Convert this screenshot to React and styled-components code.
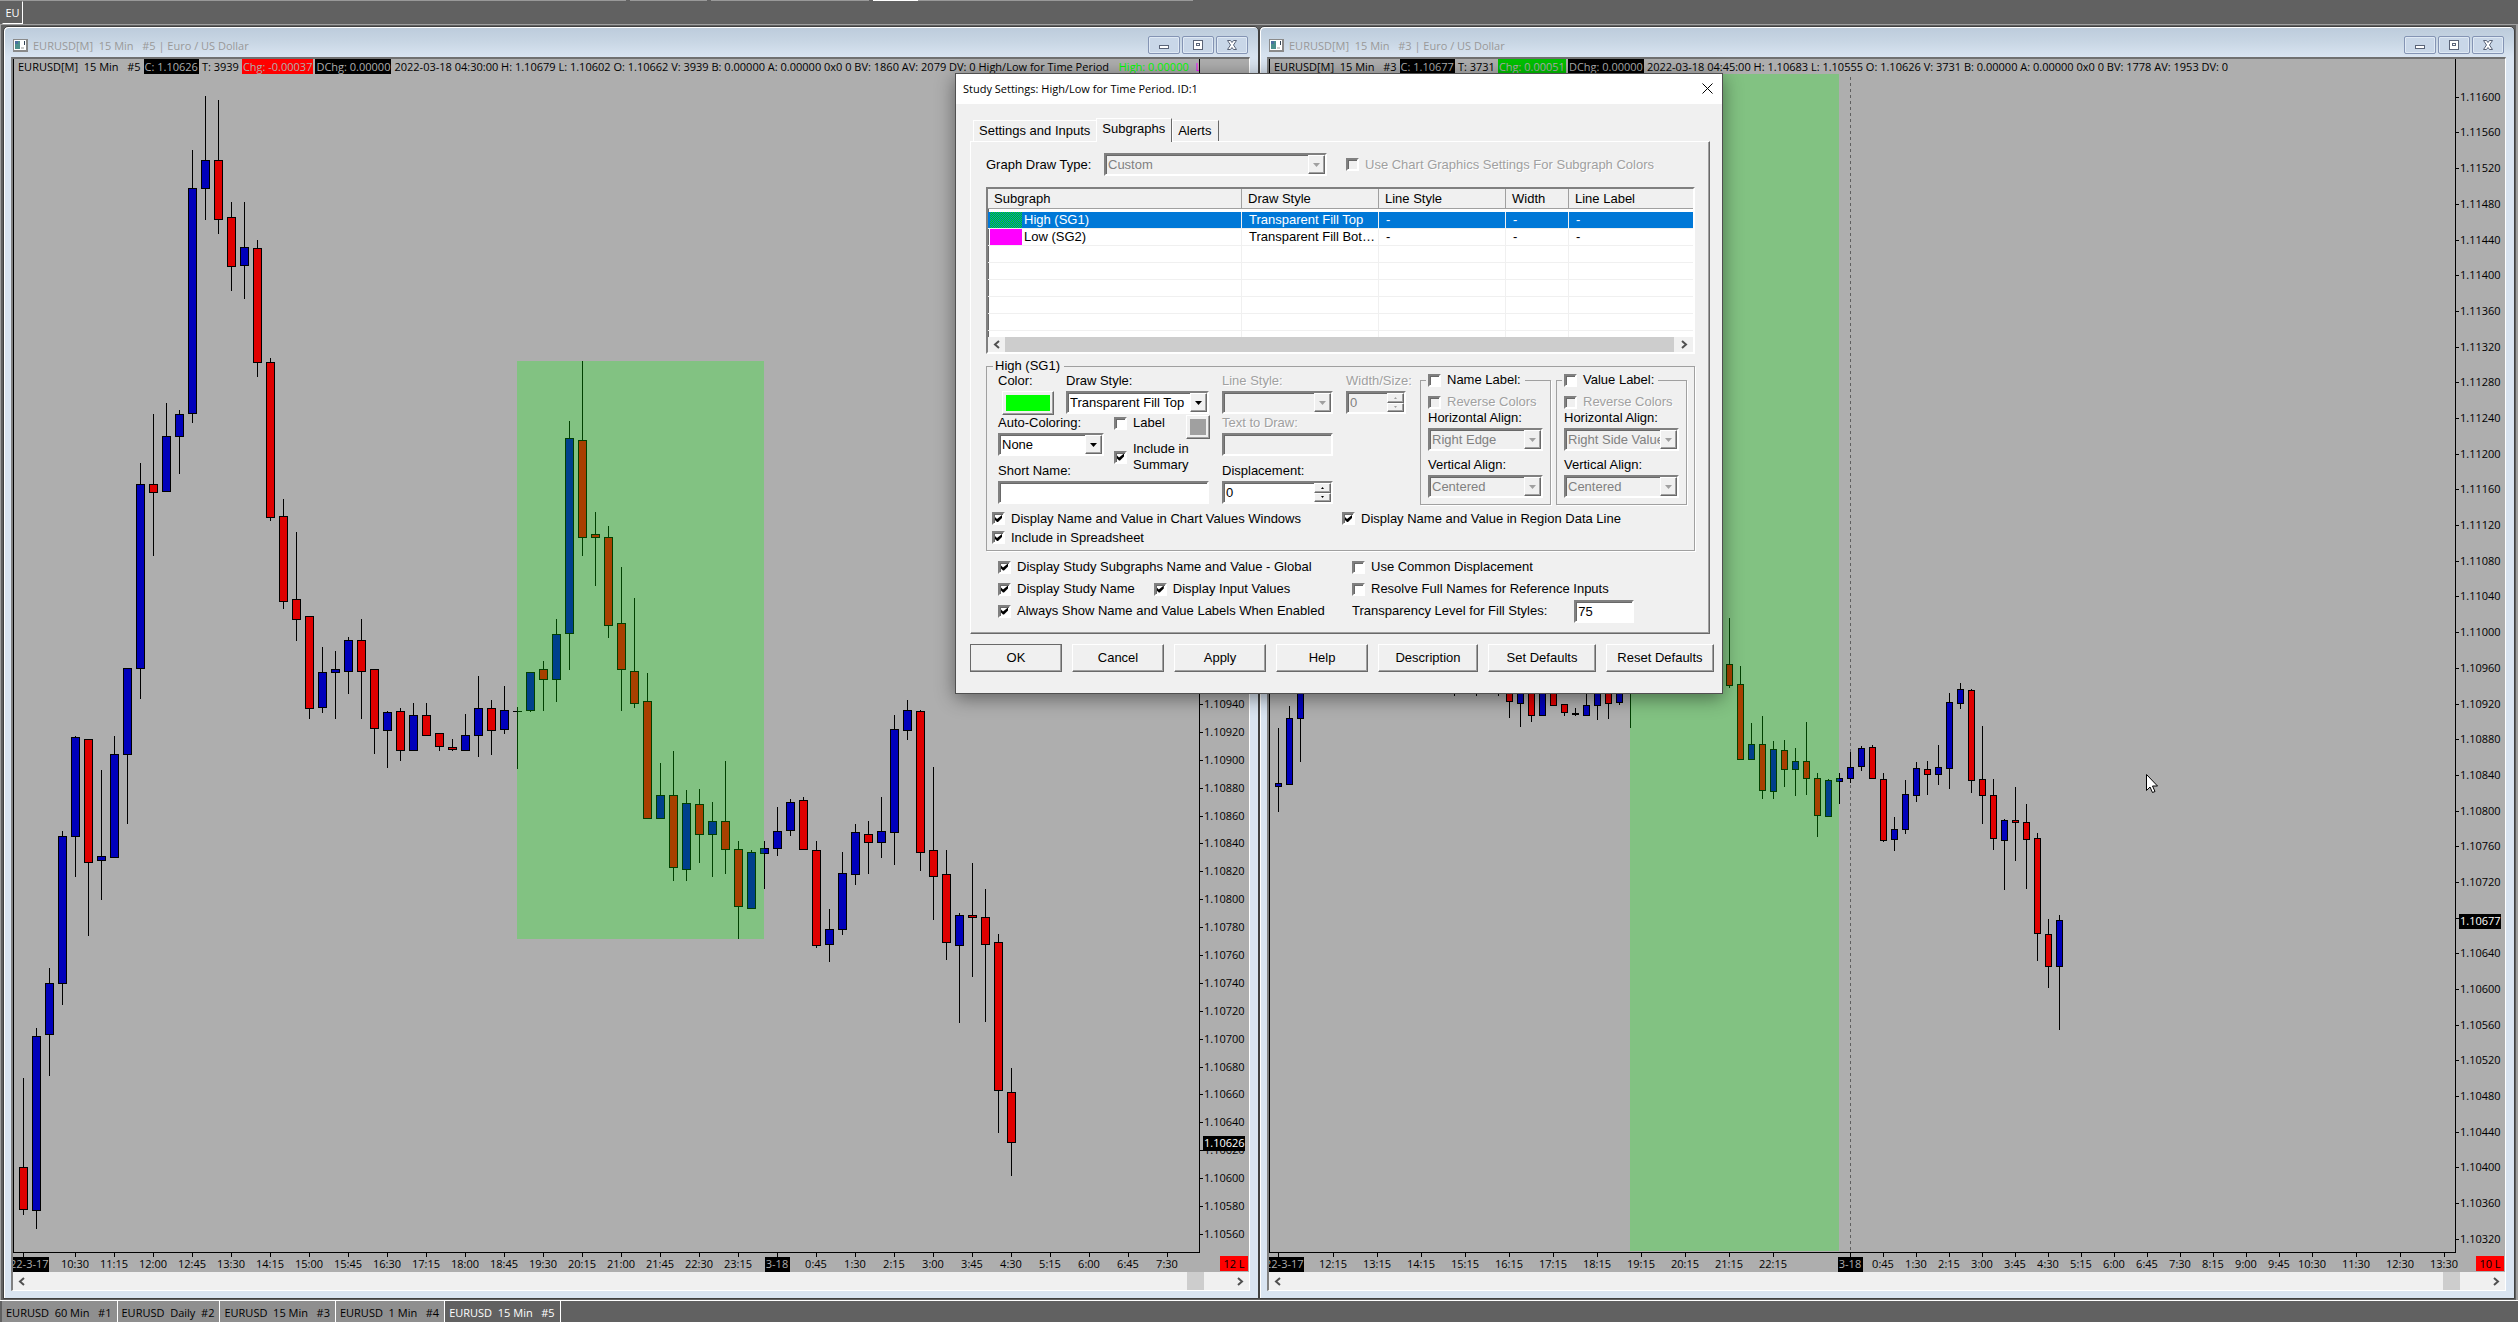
//Import necessary modules
import React from 'react'
import styled, { createGlobalStyle, css } from 'styled-components'

//Data: 15 minute bars from 9:30, prices in 0.00001 above 1
//[direction, high, body top, body bottom, low]
const BARS = [
    ['d', 10672, 10608, 10578, 10574],
    ['u', 10708, 10702, 10577, 10564],
    ['u', 10751, 10740, 10703, 10674],
    ['u', 10849, 10845, 10740, 10725],
    ['u', 10917, 10916, 10845, 10817],
    ['d', 10915, 10915, 10827, 10774],
    ['u', 10893, 10831, 10828, 10800],
    ['u', 10917, 10904, 10830, 10830],
    ['u', 10966, 10966, 10904, 10855],
    ['u', 11113, 11098, 10966, 10944],
    ['d', 11148, 11098, 11092, 11047],
    ['u', 11156, 11132, 11093, 11093],
    ['u', 11151, 11148, 11132, 11106],
    ['u', 11337, 11310, 11149, 11142],
    ['u', 11376, 11330, 11310, 11288],
    ['d', 11373, 11330, 11288, 11278],
    ['d', 11300, 11289, 11254, 11237],
    ['u', 11300, 11268, 11255, 11231],
    ['d', 11273, 11267, 11185, 11175],
    ['d', 11188, 11185, 11074, 11072],
    ['d', 11087, 11075, 11014, 11009],
    ['d', 11063, 11015, 11001, 10986],
    ['d', 11003, 11003, 10937, 10930],
    ['u', 10981, 10963, 10938, 10934],
    ['u', 10978, 10965, 10963, 10930],
    ['u', 10988, 10986, 10964, 10948],
    ['d', 11001, 10986, 10964, 10930],
    ['d', 10965, 10965, 10923, 10905],
    ['u', 10935, 10934, 10921, 10895],
    ['d', 10937, 10935, 10907, 10900],
    ['u', 10941, 10932, 10907, 10907],
    ['d', 10941, 10932, 10918, 10918],
    ['d', 10919, 10919, 10910, 10907],
    ['d', 10915, 10909, 10908, 10907],
    ['u', 10933, 10918, 10907, 10907],
    ['u', 10960, 10937, 10918, 10903],
    ['d', 10943, 10937, 10921, 10904],
    ['u', 10953, 10936, 10922, 10919],
    ['u', 10938, 10935, 10935, 10894],
    ['u', 10963, 10963, 10936, 10935],
    ['d', 10971, 10965, 10958, 10936],
    ['u', 11001, 10990, 10958, 10942],
    ['u', 11143, 11131, 10991, 10965],
    ['d', 11186, 11129, 11060, 11047],
    ['d', 11078, 11062, 11060, 11025],
    ['d', 11068, 11060, 10997, 10988],
    ['d', 11038, 10998, 10965, 10936],
    ['d', 11016, 10964, 10941, 10938],
    ['d', 10962, 10942, 10858, 10858],
    ['u', 10898, 10875, 10858, 10858],
    ['d', 10906, 10875, 10823, 10814],
    ['u', 10878, 10869, 10822, 10814],
    ['d', 10879, 10868, 10847, 10827],
    ['u', 10870, 10856, 10847, 10817],
    ['d', 10899, 10856, 10836, 10819],
    ['d', 10842, 10836, 10795, 10772],
    ['u', 10835, 10834, 10794, 10794],
    ['u', 10842, 10837, 10833, 10808],
    ['u', 10866, 10849, 10837, 10832],
    ['u', 10872, 10870, 10850, 10846],
    ['d', 10873, 10871, 10836, 10836],
    ['d', 10842, 10835, 10767, 10766],
    ['u', 10793, 10779, 10768, 10756],
    ['u', 10834, 10819, 10779, 10775],
    ['u', 10854, 10848, 10818, 10811],
    ['d', 10856, 10847, 10841, 10819],
    ['u', 10873, 10849, 10841, 10830],
    ['u', 10932, 10922, 10848, 10825],
    ['u', 10943, 10936, 10921, 10915],
    ['d', 10936, 10935, 10834, 10821],
    ['d', 10895, 10835, 10817, 10786],
    ['d', 10835, 10818, 10769, 10757],
    ['u', 10790, 10789, 10767, 10712],
    ['d', 10826, 10789, 10787, 10745],
    ['d', 10807, 10787, 10768, 10713],
    ['d', 10775, 10769, 10663, 10633],
    ['d', 10679, 10662, 10626, 10602],
    ['u', 10683, 10677, 10626, 10555],
]

const range = (from, to, step) => {
    const out = []
    for (let i = from; i <= to; i += step) out.push(i)
    return out
}

//Settings of the two charts
const LEFT = {
    id: 5,
    first: 0,
    last: 76,
    x0: 9,
    pitch: 13,
    half: 4,
    y0: 645,
    p0: 10940,
    scale: 1.3945,
    prices: range(10560, 10940, 20),
    times: range(4, 88, 3),
    price: 10626,
    lots: '12 L',
    lotsWidth: 28,
    thumb: 17,
    fill: { from: 38, to: 57, high: 11186, low: 10772 },
}
const RIGHT = {
    id: 3,
    first: 6,
    last: 77,
    x0: 8,
    pitch: 11,
    half: 3,
    y0: 644.5,
    p0: 10920,
    scale: 0.8923,
    prices: range(10320, 11600, 40),
    times: [...range(11, 51, 4), ...range(58, 100, 3), 104, 108, 112],
    price: 10677,
    lots: '10 L',
    lotsWidth: 28,
    thumb: 17,
    dayLine: true,
    fill: { from: 38, to: 57 },
}

const timeOf = (i) => {
    const m = (570 + 15 * i) % 1440
    return Math.floor(m / 60) + ':' + String(m % 60).padStart(2, '0')
}
const priceOf = (p) => (1 + p / 100000).toFixed(5)

//Styling
const GlobalStyle = createGlobalStyle`
    * { box-sizing: border-box; }
    body { margin: 0; background: #616161; }
    button, input, select { font: inherit; color: inherit; margin: 0; }
`
const chartFont = css`
    font-family: 'Open Sans', 'Noto Sans', sans-serif;
    font-size: 11px;
    line-height: 15px;
`
const raised = css`
    border: 1px solid;
    border-color: #fff #696969 #696969 #fff;
    box-shadow: inset -1px -1px 0 #a0a0a0;
    background: #f0f0f0;
`
const sunken = css`
    border: 2px solid;
    border-color: #808080 #fff #fff #808080;
    box-shadow: inset 1px 1px 0 #696969;
`
const Desktop = styled.div`
    ${chartFont}
    position: relative;
    display: flex;
    flex-direction: column;
    min-height: 100vh;
    overflow: hidden;
    background: #616161;
`
const TopBar = styled.div`
    display: flex;
    align-items: flex-end;
    height: 25px;
    padding-left: 2px;
    border-bottom: 1px solid #a0a0a0;
    background: linear-gradient(
            90deg,
            #999 0 626px, #616161 626px 630px,
            #999 630px 707px, #616161 707px 711px,
            #999 711px 869px, #616161 869px 873px,
            #fff 873px 918px, #999 918px 1193px,
            #616161 1193px
        )
        0 0 / 100% 1px no-repeat;
`
const TopTab = styled.button`
    ${chartFont}
    width: 21px;
    height: 23px;
    padding: 0;
    border: 1px solid;
    border-color: transparent #fff #fff transparent;
    background: none;
    color: #fff;
`
const Workspace = styled.main`
    display: grid;
    grid-template-columns: 1fr 1fr;
    flex: 1;
    padding: 1px 3px;
    background: linear-gradient(90deg, #a0a0a0 1px, #616161 1px calc(100% - 2px), #a0a0a0 0);
`
const Frame = styled.section`
    display: flex;
    flex-direction: column;
    min-width: 0;
    padding: 0 8px 7px 7px;
    border: 1px solid #404040;
    border-radius: 5px 5px 0 0;
    box-shadow: inset 1px 1px 0 #fff;
    background: linear-gradient(#bccbdb, #c8d6e4 15px, #d9e4f1 30px);
`
const TitleBar = styled.header`
    display: flex;
    align-items: center;
    gap: 5px;
    height: 30px;
    padding: 6px 2px 0;
    color: #999;
    white-space: pre;
`
const Title = styled.h2`
    flex: 1;
    margin: 0;
    font-size: 11px;
    font-weight: 400;
`
const FrameButtons = styled.div`
    display: flex;
    gap: 2px;
`
const FrameButton = styled.button`
    display: flex;
    align-items: center;
    justify-content: center;
    width: 32px;
    height: 18px;
    padding: 0;
    border: 1px solid #8494b4;
    border-radius: 2px;
    box-shadow: inset 0 0 0 1px #dfe9f4;
    background: #c9d7e8;
`
const Client = styled.div`
    display: flex;
    flex-direction: column;
    flex: 1;
    border: 2px solid;
    border-width: 2px 1px 1px 2px;
    border-color: #707070 #fff #fff #808080;
    background: #aeaeae;
`
const ChartArea = styled.div`
    display: flex;
    flex: 1;
`
const Plot = styled.div`
    position: relative;
    flex: 1;
    min-width: 0;
    overflow: hidden;
    border: solid #000;
    border-width: 0 0 1px 1px;
`
const Drawing = styled.svg`
    position: absolute;
    inset: 0;
    width: 100%;
    height: 100%;
    shape-rendering: crispEdges;
`
const DataLine = styled.div`
    position: absolute;
    inset: 0 0 auto;
    display: flex;
    height: 15px;
    padding-left: 3px;
    overflow: hidden;
    background: #aeaeae;
    white-space: pre;
`
const DataItem = styled.span`
    flex: none;
    margin-right: 2px;
    padding: 0 1px;
    color: ${(p) => p.$color || '#000'};
    background: ${(p) => p.$bg || 'none'};
`
const PriceAxis = styled.svg`
    width: 50px;
    height: auto;
    overflow: hidden;
    border-left: 1px solid #000;
    shape-rendering: crispEdges;
`
const TimeRow = styled.div`
    display: flex;
    height: 19px;
    padding-right: 1px;
`
const TimeAxis = styled.svg`
    flex: 1;
    min-width: 0;
    height: 19px;
    shape-rendering: crispEdges;
`
const Lots = styled.span`
    width: ${(p) => p.$width}px;
    height: 15px;
    margin-top: 3px;
    background: #f00;
    text-align: center;
`
const ScrollBar = styled.div`
    display: flex;
    height: ${(p) => p.$height || 18}px;
    background: #f0f0f0;
`
const ScrollArrow = styled.button`
    display: flex;
    align-items: center;
    justify-content: center;
    width: 17px;
    padding: 0;
    border: 0;
    background: none;
`
const Track = styled.div`
    display: flex;
    justify-content: flex-end;
    flex: 1;
    padding-right: ${(p) => p.$rest}px;
`
const Thumb = styled.div`
    width: ${(p) => p.$width};
    background: #cdcdcd;
`
const ChartTabs = styled.nav`
    display: flex;
    height: 22px;
    border-top: 1px solid #fff;
    padding-left: 2px;
`
const ChartTab = styled.button`
    padding: 2px 5px 0 4px;
    border: 0;
    border-right: 1px solid #fff;
    background: ${(p) => (p.$active ? '#616161' : '#8f8f8f')};
    color: ${(p) => (p.$active ? '#fff' : '#000')};
    white-space: pre;
`
const Pointer = styled.svg`
    position: absolute;
    left: 2146px;
    top: 774px;
    width: 12px;
    height: 19px;
`

//Styling of the dialog
const Dialog = styled.div`
    position: absolute;
    left: 955px;
    top: 73px;
    width: 768px;
    border: 1px solid #505050;
    box-shadow: 0 4px 18px rgba(0, 0, 0, 0.45);
    background: #f0f0f0;
    color: #000;
    font-family: 'Liberation Sans', Arial, sans-serif;
    font-size: 13px;
    line-height: 16px;
`
const DialogTitle = styled.header`
    ${chartFont}
    display: flex;
    align-items: center;
    justify-content: space-between;
    height: 30px;
    padding: 0 9px 2px 7px;
    background: #fff;
`
const DialogName = styled.h1`
    margin: 0;
    font-size: 11px;
    font-weight: 400;
`
const CloseButton = styled.button`
    display: flex;
    padding: 0;
    border: 0;
    background: none;
`
const DialogBody = styled.div`
    padding: 14px 8px 21px 14px;
`
const TabList = styled.div`
    display: flex;
    align-items: flex-end;
    padding-left: 3px;
`
const Tab = styled.button`
    position: relative;
    z-index: ${(p) => (p.$active ? 1 : 0)};
    height: ${(p) => (p.$active ? 24 : 21)}px;
    margin-bottom: ${(p) => (p.$active ? -1 : 0)}px;
    padding: 0 ${(p) => (p.$last ? 7 : 6)}px ${(p) => (p.$active ? 3 : 0)}px 5px;
    border: solid;
    border-width: 1px ${(p) => (p.$active || p.$last ? 1 : 0)}px 0 1px;
    border-color: #fff #696969 #fff #fff;
    background: #f0f0f0;
`
const Pane = styled.div`
    ${raised}
    width: 740px;
    height: 493px;
    padding: 11px 14px 0 15px;
`
const TypeRow = styled.div`
    display: flex;
    align-items: center;
    margin-bottom: 11px;
`
const TypeLabel = styled.label`
    width: 118px;
`
const SelectBox = styled.span`
    ${sunken}
    display: flex;
    width: ${(p) => p.$width}px;
    height: 23px;
    margin-right: ${(p) => p.$after || 0}px;
    padding-left: 2px;
    background: ${(p) => (p.$off ? '#f0f0f0' : '#fff')};
`
const Select = styled.select`
    flex: 1;
    width: 0;
    min-width: 0;
    padding: 0;
    border: 0;
    appearance: none;
    background: none;
    color: #000;
    opacity: 1;
    outline: 0;
    &:disabled { color: #808080; }
`
const Arrow = styled.span`
    ${raised}
    display: flex;
    align-items: center;
    justify-content: center;
    width: 17px;
    flex: none;
`
const Spin = styled.span`
    display: flex;
    flex-direction: column;
    width: 17px;
`
const SpinButton = styled.button`
    ${raised}
    display: flex;
    align-items: center;
    justify-content: center;
    flex: 1;
    padding: 0;
`
const TextInput = styled.input`
    ${sunken}
    width: ${(p) => p.$width}px;
    height: 23px;
    padding: 0 2px;
    background: #fff;
    outline: 0;
    &:disabled { background: #f0f0f0; }
`
const SpinInput = styled.input`
    flex: 1;
    width: 0;
    min-width: 0;
    padding: 0;
    border: 0;
    background: none;
    outline: 0;
    &:disabled { color: #808080; }
`
const CheckLabel = styled.label`
    display: flex;
    align-items: center;
    gap: 6px;
    color: ${(p) => (p.$off ? '#a0a0a0' : '#000')};
    text-shadow: ${(p) => (p.$off ? '1px 1px 0 #fff' : 'none')};
    white-space: ${(p) => (p.$wrap ? 'normal' : 'nowrap')};
`
const Box = styled.input`
    ${sunken}
    position: relative;
    flex: none;
    width: 13px;
    height: 13px;
    appearance: none;
    background: #fff;
    &:disabled { background: #f0f0f0; }
    &:checked::after {
        content: '';
        position: absolute;
        left: 1px;
        top: 1px;
        width: 7px;
        height: 7px;
        background: #000;
        clip-path: polygon(0 2px, 2px 4px, 7px 0, 7px 3px, 3px 7px, 2px 7px, 0 5px);
    }
`
const List = styled.div`
    ${sunken}
    margin-bottom: 5px;
    background: #fff;
`
const ListView = styled.div`
    height: 148px;
    overflow: hidden;
`
const Table = styled.table`
    width: 100%;
    table-layout: fixed;
    border-collapse: separate;
    border-spacing: 0;
    tbody::before {
        content: '';
        display: table-row;
        height: 3px;
    }
`
const Head = styled.th`
    width: ${(p) => p.$width};
    height: 20px;
    padding: 0 0 0 6px;
    border-right: 1px solid #a0a0a0;
    border-bottom: 1px solid #a0a0a0;
    background: #f0f0f0;
    font-weight: 400;
    text-align: left;
    &:last-child { border-right: 0; }
`
const Cell = styled.td`
    height: 17px;
    padding: 0 0 0 ${(p) => (p.$first ? 2 : 7)}px;
    overflow: hidden;
    border: solid #f0f0f0;
    border-width: 0 1px 1px 0;
    background: ${(p) => (p.$selected ? '#0078d7' : 'none')};
    color: ${(p) => (p.$selected ? '#fff' : '#000')};
    white-space: nowrap;
    text-overflow: ellipsis;
    &:last-child { border-right: 0; }
`
const SubgraphName = styled.span`
    display: flex;
    gap: 2px;
`
const Swatch = styled.i`
    width: 32px;
    height: 16px;
    background: ${(p) => p.$fill};
`
const Group = styled.fieldset`
    min-width: 0;
    width: ${(p) => p.$width || 'auto'};
    margin: 0;
    padding: ${(p) => p.$padding};
    border: 1px solid #a0a0a0;
    box-shadow: 1px 1px 0 #fff;
`
const Legend = styled.legend`
    margin-left: ${(p) => p.$left}px;
    padding: 0 4px 0 2px;
    background: #f0f0f0;
    line-height: 14px;
`
const Columns = styled.div`
    display: flex;
    padding-left: 6px;
`
const Column = styled.div`
    display: grid;
    align-content: start;
    grid-template-rows: 42px 48px 42px;
    width: ${(p) => p.$width}px;
    margin-right: ${(p) => p.$after}px;
`
const FieldRow = styled.div`
    display: flex;
    gap: ${(p) => p.$gap}px;
`
const FieldBox = styled.div`
    display: flex;
    flex-direction: column;
    gap: 2px;
    margin-bottom: ${(p) => p.$after || 0}px;
`
const FieldLabel = styled.label`
    white-space: nowrap;
    color: ${(p) => (p.$off ? '#a0a0a0' : '#000')};
    text-shadow: ${(p) => (p.$off ? '1px 1px 0 #fff' : 'none')};
`
const ColorButton = styled.button`
    ${raised}
    width: ${(p) => p.$width}px;
    height: 24px;
    margin-left: ${(p) => p.$left || 0}px;
    padding: 3px;
    &::before {
        content: '';
        display: block;
        height: 16px;
        background: ${(p) => p.$fill};
    }
`
const Options = styled.div`
    width: 96px;
`
const OptionRow = styled.div`
    display: flex;
    align-items: flex-start;
    justify-content: space-between;
    height: 26px;
`
const Checks = styled.div`
    display: grid;
    grid-template-columns: ${(p) => p.$columns};
    grid-auto-rows: ${(p) => p.$row}px;
    align-items: center;
    padding: ${(p) => p.$padding};
`
const Inline = styled.div`
    display: flex;
    align-items: center;
    gap: ${(p) => p.$gap}px;
    white-space: nowrap;
`
const Actions = styled.div`
    display: flex;
    gap: 10px;
    margin-top: 10px;
`
const Action = styled.button`
    ${raised}
    width: ${(p) => p.$width}px;
    height: 28px;
    padding: 0;
    outline: ${(p) => (p.$default ? '1px solid #696969' : '0')};
    outline-offset: -1px;
    white-space: nowrap;
`

//Small drawings
function Chevron({ right }) {
    return (
        <svg width="7" height="9" viewBox="0 0 7 9" fill="none" stroke="#505050" strokeWidth="2">
            <path d={right ? 'M1 1l4 3.500l-4 3.500' : 'M6 1l-4 3.500l4 3.500'} />
        </svg>
    )
}
function Triangle({ up, small, off }) {
    const w = small ? 3 : 7
    const h = small ? 2 : 4
    return (
        <svg width={w} height={h} viewBox={`0 0 ${w} ${h}`} fill={off ? '#a0a0a0' : '#000'}>
            <path d={up ? `M0 ${h}h${w}L${w / 2} 0z` : `M0 0h${w}L${w / 2} ${h}z`} />
        </svg>
    )
}
function WindowIcon() {
    return (
        <svg width="15" height="13" viewBox="0 0 15 13">
            <rect width="15" height="13" fill="#8a8a8a" />
            <rect x="1" y="1" width="12" height="10" fill="#fff" />
            <rect x="2" y="2" width="5" height="8" fill="#4a8f8c" />
            <rect x="2" y="2" width="3" height="3" fill="#4a6fa0" />
            <rect x="8" y="8" width="3" height="2" fill="#ccc" />
            <rect x="11" y="2" width="1" height="4" fill="#345" />
        </svg>
    )
}
const glyph = { fill: '#fff', stroke: '#5a6478' }

//Labels and controls
function Check({ id, label, checked, off, wrap }) {
    return (
        <CheckLabel htmlFor={id} $off={off} $wrap={wrap}>
            <Box type="checkbox" id={id} defaultChecked={checked} disabled={off} />
            {label}
        </CheckLabel>
    )
}
function DropDown({ id, value, width, off, after }) {
    return (
        <SelectBox $width={width} $off={off} $after={after}>
            <Select id={id} disabled={off}>
                <option>{value}</option>
            </Select>
            <Arrow><Triangle off={off} /></Arrow>
        </SelectBox>
    )
}
function Spinner({ id, width, off }) {
    return (
        <SelectBox $width={width} $off={off}>
            <SpinInput id={id} defaultValue="0" disabled={off} />
            <Spin>
                <SpinButton aria-label="Up" disabled={off}><Triangle up small off={off} /></SpinButton>
                <SpinButton aria-label="Down" disabled={off}><Triangle small off={off} /></SpinButton>
            </Spin>
        </SelectBox>
    )
}
function Field({ id, label, off, after, children }) {
    return (
        <FieldBox $after={after}>
            <FieldLabel htmlFor={id} $off={off}>{label}</FieldLabel>
            {children}
        </FieldBox>
    )
}

//One candle: wick, outline and body
function Candle({ bar, x, half, y }) {
    const [dir, high, top, bottom, low] = bar
    const yt = y(top)
    const h = y(bottom) - yt + 1
    return (
        <g>
            <rect x={x} y={y(high)} width="1" height={y(low) - y(high) + 1} />
            <rect x={x - half} y={yt} width={half * 2 + 1} height={h} />
            {h > 2 && (
                <rect
                    x={x - half + 1}
                    y={yt + 1}
                    width={half * 2 - 1}
                    height={h - 2}
                    fill={dir === 'u' ? '#0000bb' : '#e00000'}
                />
            )}
        </g>
    )
}

//A chart window
function ChartWindow({ chart, children }) {
    const x = (i) => chart.x0 + (i - chart.first) * chart.pitch
    const y = (p) => Math.round(chart.y0 + (chart.p0 - p) * chart.scale)
    const { fill } = chart
    const fillTop = fill.high ? y(fill.high) : 0
    const fillHeight = fill.low ? y(fill.low) - fillTop + 1 : 1192
    return (
        <Frame>
            <TitleBar>
                <WindowIcon />
                <Title>{`EURUSD[M]  15 Min   #${chart.id} | Euro / US Dollar`}</Title>
                <FrameButtons>
                    <FrameButton aria-label="Minimize">
                        <svg width="12" height="12" {...glyph}><rect x="1.500" y="6.500" width="9" height="3" /></svg>
                    </FrameButton>
                    <FrameButton aria-label="Restore">
                        <svg width="12" height="12" {...glyph}>
                            <rect x="1.500" y="1.500" width="9" height="9" />
                            <rect x="4.500" y="4.500" width="3" height="2" />
                        </svg>
                    </FrameButton>
                    <FrameButton aria-label="Close">
                        <svg width="12" height="12" {...glyph}>
                            <path d="M1.500 1.500h3l1.500 2l1.500-2h3l-3 4.500l3 4.500h-3l-1.500-2l-1.500 2h-3l3-4.500z" />
                        </svg>
                    </FrameButton>
                </FrameButtons>
            </TitleBar>
            <Client>
                <ChartArea>
                    <Plot>
                        <Drawing>
                            {chart.dayLine && (
                                <line x1={x(58) + 0.5} x2={x(58) + 0.5} y1="0" y2="100%" stroke="#606060" strokeDasharray="3 3" />
                            )}
                            {BARS.slice(chart.first, chart.last + 1).map((bar, n) => (
                                <Candle key={n} bar={bar} x={x(chart.first + n)} half={chart.half} y={y} />
                            ))}
                            <rect
                                x={x(fill.from)}
                                y={fillTop}
                                width={x(fill.to) - x(fill.from)}
                                height={fillHeight}
                                fill="#0f0"
                                fillOpacity="0.25"
                            />
                        </Drawing>
                        <DataLine>{children}</DataLine>
                    </Plot>
                    <PriceAxis>
                        {chart.prices.map((p) => (
                            <g key={p}>
                                <rect y={y(p)} width="3" height="1" />
                                {Math.abs(p - chart.price) > 4 && <text x="4" y={y(p) + 4}>{priceOf(p)}</text>}
                            </g>
                        ))}
                        <rect x="3" y={y(chart.price) - 6} width="42" height="15" />
                        <text x="4" y={y(chart.price) + 5} fill="#fff">{priceOf(chart.price)}</text>
                    </PriceAxis>
                </ChartArea>
                <TimeRow>
                    <TimeAxis>
                        <rect x={x(chart.first) + 1} width="1" height="4" />
                        <rect x={x(chart.first) - 26} y="4" width="53" height="15" />
                        <text x={x(chart.first) + 1} y="15" textAnchor="middle" fill="#aeaeae">2022-3-17</text>
                        {chart.times.map((i) => (
                            <g key={i}>
                                <rect x={x(i) + 1} width="1" height="4" />
                                {i === 58 && <rect x={x(i) - 11} y="4" width="25" height="15" />}
                                <text x={x(i) + 1} y="15" textAnchor="middle" fill={i === 58 ? '#aeaeae' : '#000'}>
                                    {i === 58 ? '3-18' : timeOf(i)}
                                </text>
                            </g>
                        ))}
                    </TimeAxis>
                    <Lots $width={chart.lotsWidth}>{chart.lots}</Lots>
                </TimeRow>
                <ScrollBar>
                    <ScrollArrow aria-label="Scroll left"><Chevron /></ScrollArrow>
                    <Track $rest={28}><Thumb $width={chart.thumb + 'px'} /></Track>
                    <ScrollArrow aria-label="Scroll right"><Chevron right /></ScrollArrow>
                </ScrollBar>
            </Client>
        </Frame>
    )
}

//Name and value label groups
function LabelGroup({ id, title, align }) {
    return (
        <Group $width="131px" $padding="7px 7px 1px">
            <Legend $left={-2}><Check id={id} label={title} /></Legend>
            <Check id={id + '-reverse'} label="Reverse Colors" off />
            <Field id={id + '-h'} label="Horizontal Align:" after={6}>
                <DropDown id={id + '-h'} value={align} width={115} off />
            </Field>
            <Field id={id + '-v'} label="Vertical Align:">
                <DropDown id={id + '-v'} value="Centered" width={115} off />
            </Field>
        </Group>
    )
}

//The list of subgraphs
function SubgraphList() {
    return (
        <List>
            <ListView>
                <Table>
                    <thead>
                        <tr>
                            <Head $width="254px">Subgraph</Head>
                            <Head $width="137px">Draw Style</Head>
                            <Head $width="127px">Line Style</Head>
                            <Head $width="63px">Width</Head>
                            <Head>Line Label</Head>
                        </tr>
                    </thead>
                    <tbody>
                        <tr>
                            <Cell $first $selected>
                                <SubgraphName>
                                    <Swatch $fill="repeating-conic-gradient(#00e000 0 25%, #0078d7 0 50%) 0 0 / 2px 2px" />
                                    High (SG1)
                                </SubgraphName>
                            </Cell>
                            <Cell $selected>Transparent Fill Top</Cell>
                            <Cell $selected>-</Cell>
                            <Cell $selected>-</Cell>
                            <Cell $selected>-</Cell>
                        </tr>
                        <tr>
                            <Cell $first>
                                <SubgraphName>
                                    <Swatch $fill="#f0f" />
                                    Low (SG2)
                                </SubgraphName>
                            </Cell>
                            <Cell>Transparent Fill Bottom</Cell>
                            <Cell>-</Cell>
                            <Cell>-</Cell>
                            <Cell>-</Cell>
                        </tr>
                        {[1, 2, 3, 4, 5, 6].map((n) => (
                            <tr key={n}>
                                <Cell $first />
                                <Cell />
                                <Cell />
                                <Cell />
                                <Cell />
                            </tr>
                        ))}
                    </tbody>
                </Table>
            </ListView>
            <ScrollBar $height={15}>
                <ScrollArrow aria-label="Scroll left"><Chevron /></ScrollArrow>
                <Track $rest={2}><Thumb $width="100%" /></Track>
                <ScrollArrow aria-label="Scroll right"><Chevron right /></ScrollArrow>
            </ScrollBar>
        </List>
    )
}

//The settings dialog
function StudySettings() {
    return (
        <Dialog role="dialog" aria-labelledby="study-title">
            <DialogTitle>
                <DialogName id="study-title">Study Settings: High/Low for Time Period. ID:1</DialogName>
                <CloseButton aria-label="Close">
                    <svg width="11" height="11" stroke="#000"><path d="M0.500 0.500l10 10M10.500 0.500l-10 10" /></svg>
                </CloseButton>
            </DialogTitle>
            <DialogBody>
                <TabList role="tablist">
                    <Tab role="tab">Settings and Inputs</Tab>
                    <Tab role="tab" aria-selected $active>Subgraphs</Tab>
                    <Tab role="tab" $last>Alerts</Tab>
                </TabList>
                <Pane>
                    <TypeRow>
                        <TypeLabel htmlFor="draw-type">Graph Draw Type:</TypeLabel>
                        <DropDown id="draw-type" value="Custom" width={223} after={19} off />
                        <Check id="chart-graphics" label="Use Chart Graphics Settings For Subgraph Colors" off />
                    </TypeRow>
                    <SubgraphList />
                    <Group $padding="0 7px 3px 5px">
                        <Legend $left={1}>High (SG1)</Legend>
                        <Columns>
                            <Column $width={212} $after={12}>
                                <FieldRow $gap={12}>
                                    <Field id="color" label="Color:">
                                        <ColorButton id="color" $width={52} $left={4} $fill="#0f0" />
                                    </Field>
                                    <Field id="draw-style" label="Draw Style:">
                                        <DropDown id="draw-style" value="Transparent Fill Top" width={143} />
                                    </Field>
                                </FieldRow>
                                <FieldRow $gap={10}>
                                    <Field id="auto-coloring" label="Auto-Coloring:">
                                        <DropDown id="auto-coloring" value="None" width={106} />
                                    </Field>
                                    <Options>
                                        <OptionRow>
                                            <Check id="label" label="Label" />
                                            <ColorButton aria-label="Label color" $width={24} $fill="#a0a0a0" />
                                        </OptionRow>
                                        <Check id="summary" label="Include in Summary" checked wrap />
                                    </Options>
                                </FieldRow>
                                <Field id="short-name" label="Short Name:">
                                    <TextInput id="short-name" $width={211} />
                                </Field>
                            </Column>
                            <Column $width={112} $after={12}>
                                <Field id="line-style" label="Line Style:" off>
                                    <DropDown id="line-style" value="" width={111} off />
                                </Field>
                                <Field id="draw-text" label="Text to Draw:" off>
                                    <TextInput id="draw-text" $width={111} disabled />
                                </Field>
                                <Field id="displacement" label="Displacement:">
                                    <Spinner id="displacement" width={111} />
                                </Field>
                            </Column>
                            <Column $width={60} $after={14}>
                                <Field id="width" label="Width/Size:" off>
                                    <Spinner id="width" width={60} off />
                                </Field>
                            </Column>
                            <FieldRow $gap={5}>
                                <LabelGroup id="name-label" title="Name Label:" align="Right Edge" />
                                <LabelGroup id="value-label" title="Value Label:" align="Right Side Values" />
                            </FieldRow>
                        </Columns>
                        <Checks $columns="350px 1fr" $row={19} $padding="4px 0 0">
                            <Check id="values-windows" label="Display Name and Value in Chart Values Windows" checked />
                            <Check id="region-line" label="Display Name and Value in Region Data Line" checked />
                            <Check id="spreadsheet" label="Include in Spreadsheet" checked />
                        </Checks>
                    </Group>
                    <Checks $columns="354px 1fr" $row={22} $padding="5px 0 0 12px">
                        <Check id="global" label="Display Study Subgraphs Name and Value - Global" checked />
                        <Check id="common" label="Use Common Displacement" />
                        <Inline $gap={19}>
                            <Check id="study-name" label="Display Study Name" checked />
                            <Check id="input-values" label="Display Input Values" checked />
                        </Inline>
                        <Check id="resolve" label="Resolve Full Names for Reference Inputs" />
                        <Check id="always" label="Always Show Name and Value Labels When Enabled" checked />
                        <Inline $gap={27}>
                            <label htmlFor="transparency">Transparency Level for Fill Styles:</label>
                            <TextInput id="transparency" $width={60} defaultValue="75" />
                        </Inline>
                    </Checks>
                </Pane>
                <Actions>
                    <Action $width={92} $default>OK</Action>
                    <Action $width={92}>Cancel</Action>
                    <Action $width={92}>Apply</Action>
                    <Action $width={92}>Help</Action>
                    <Action $width={100}>Description</Action>
                    <Action $width={108}>Set Defaults</Action>
                    <Action $width={108}>Reset Defaults</Action>
                </Actions>
            </DialogBody>
        </Dialog>
    )
}

function App() {
    return (
        <Desktop>
            <GlobalStyle />
            <TopBar>
                <TopTab>EU</TopTab>
            </TopBar>
            <Workspace>
                <ChartWindow chart={LEFT}>
                    <DataItem>{'EURUSD[M]  15 Min   #5'}</DataItem>
                    <DataItem $color="#aeaeae" $bg="#000">C: 1.10626</DataItem>
                    <DataItem>T: 3939</DataItem>
                    <DataItem $color="#aeaeae" $bg="#f00">Chg: -0.00037</DataItem>
                    <DataItem $color="#aeaeae" $bg="#000">DChg: 0.00000</DataItem>
                    <DataItem>2022-03-18 04:30:00 H: 1.10679 L: 1.10602 O: 1.10662 V: 3939 B: 0.00000 A: 0.00000 0x0 0 BV: 1860 AV: 2079 DV: 0 High/Low for Time Period </DataItem>
                    <DataItem $color="#0f0"> High: 0.00000 </DataItem>
                    <DataItem $color="#f0f">L</DataItem>
                </ChartWindow>
                <ChartWindow chart={RIGHT}>
                    <DataItem>{'EURUSD[M]  15 Min   #3'}</DataItem>
                    <DataItem $color="#aeaeae" $bg="#000">C: 1.10677</DataItem>
                    <DataItem>T: 3731</DataItem>
                    <DataItem $color="#aeaeae" $bg="#00c000">Chg: 0.00051</DataItem>
                    <DataItem $color="#aeaeae" $bg="#000">DChg: 0.00000</DataItem>
                    <DataItem>2022-03-18 04:45:00 H: 1.10683 L: 1.10555 O: 1.10626 V: 3731 B: 0.00000 A: 0.00000 0x0 0 BV: 1778 AV: 1953 DV: 0</DataItem>
                </ChartWindow>
            </Workspace>
            <ChartTabs>
                <ChartTab>{'EURUSD  60 Min   #1'}</ChartTab>
                <ChartTab>{'EURUSD  Daily  #2'}</ChartTab>
                <ChartTab>{'EURUSD  15 Min   #3'}</ChartTab>
                <ChartTab>{'EURUSD  1 Min   #4'}</ChartTab>
                <ChartTab $active>{'EURUSD  15 Min   #5'}</ChartTab>
            </ChartTabs>
            <StudySettings />
            <Pointer viewBox="0 0 12 19" fill="#fff" stroke="#000">
                <path d="M0.500 0.500v16l3.500-3.500l2.500 5.500l2.500-1l-2.500-5.500h5z" />
            </Pointer>
        </Desktop>
    )
}
//Export App Function
export default App
